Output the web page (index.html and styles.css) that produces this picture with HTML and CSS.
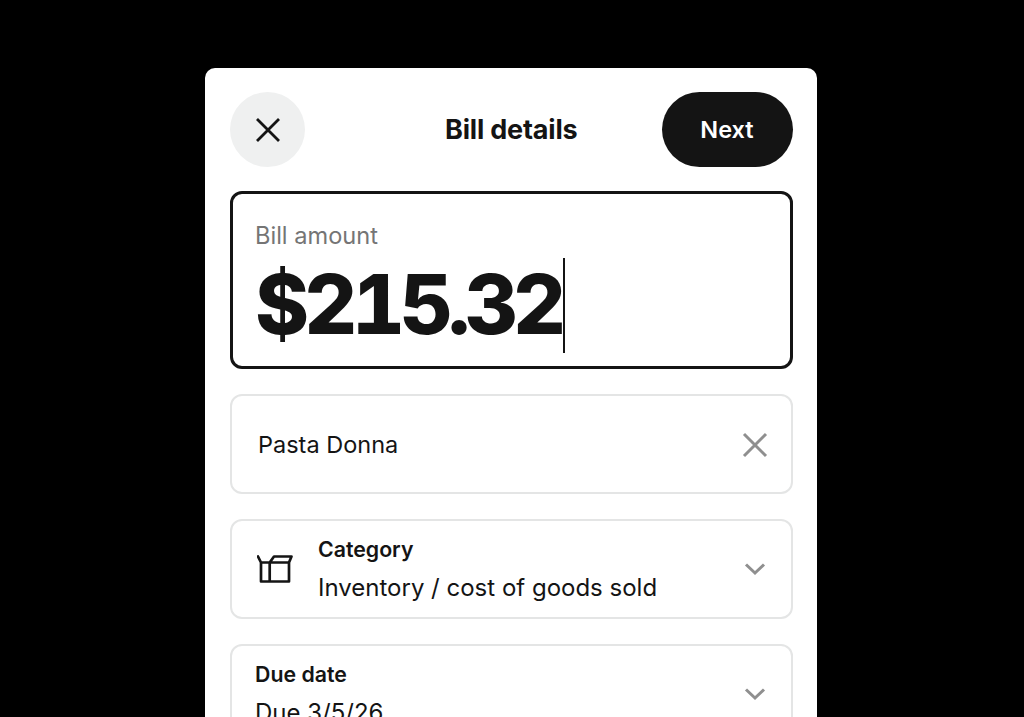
FILE: index.html
```html
<!DOCTYPE html>
<html>
<head>
  <title>Bill details</title>
  <link rel="stylesheet" href="styles.css">
</head>
<body>
  <div class="card">
    <div class="header">
      <button class="close-button">
        <svg width="26" height="26" viewBox="0 0 26 26"><path d="M2 2L24 24M24 2L2 24" fill="none" stroke="#141414" stroke-width="2.800"/></svg>
      </button>
      <h1 class="heading">Bill details</h1>
      <button class="next-button">Next</button>
    </div>

    <div class="amount-box">
      <div class="amount-label">Bill amount</div>
      <div class="amount-value">$215.32<span class="caret"></span></div>
    </div>

    <div class="field vendor-field">
      <span class="field-value vendor-name">Pasta Donna</span>
      <svg class="field-icon" width="26" height="26" viewBox="0 0 26 26"><path d="M2 2L24 24M24 2L2 24" fill="none" stroke="#8f8f8f" stroke-width="3"/></svg>
    </div>

    <div class="field">
      <svg class="box-icon" width="36" height="28" viewBox="0 0 36 28"><path d="M1 1.500L4 7.500H32M4 7.500V26.500H32V7.500M12.700 7.500V26.500M12.700 7.500L17 1.500H34.500L32 7.500" fill="none" stroke="#141414" stroke-width="2.700" stroke-linejoin="round" stroke-linecap="round"/></svg>
      <div class="field-text">
        <div class="field-label">Category</div>
        <span class="field-value">Inventory / cost of goods sold</span>
      </div>
      <svg class="field-icon" width="22" height="14" viewBox="0 0 22 14"><path d="M2 2.500L11 11L20 2.500" fill="none" stroke="#8f8f8f" stroke-width="3"/></svg>
    </div>

    <div class="field">
      <div class="field-text">
        <div class="field-label">Due date</div>
        <span class="field-value">Due 3/5/26</span>
      </div>
      <svg class="field-icon" width="22" height="14" viewBox="0 0 22 14"><path d="M2 2.500L11 11L20 2.500" fill="none" stroke="#8f8f8f" stroke-width="3"/></svg>
    </div>
  </div>
</body>
</html>
```

FILE: styles.css
```css
html, body {
  height: 100%;
}

body {
  margin: 0;
  background-color: #000;
  font-family: Inter, "Liberation Sans", sans-serif;
  color: #141414;
  overflow: hidden;
}

.card {
  width: 562.500px;
  margin: 68px 0 0 205px;
  padding: 24px 24.500px 40px 25px;
  background-color: #fff;
  border-radius: 10px;
}

.header {
  display: grid;
  grid-template-columns: 1fr auto 1fr;
  align-items: center;
  margin-bottom: 24px;
}

.close-button {
  display: flex;
  align-items: center;
  justify-content: center;
  width: 75px;
  height: 75px;
  padding: 0;
  border: none;
  border-radius: 50%;
  background-color: #eff0f0;
}

.heading {
  margin: 0;
  font-size: 27px;
  font-weight: 700;
  letter-spacing: -0.200px;
}

.next-button {
  justify-self: end;
  width: 131px;
  height: 75px;
  padding: 0;
  border: none;
  border-radius: 38px;
  background-color: #141414;
  color: #fff;
  font-family: inherit;
  font-size: 23.500px;
  font-weight: 600;
}

.amount-box {
  box-sizing: border-box;
  height: 178px;
  padding: 28px 22px 0;
  border: 3px solid #141414;
  border-radius: 12px;
  margin-bottom: 25px;
}

.amount-label {
  font-size: 23.600px;
  line-height: 28px;
  color: #757575;
}

.amount-value {
  display: flex;
  align-items: center;
  height: 100px;
  margin-top: 5px;
  font-size: 82px;
  font-weight: 800;
  font-feature-settings: "tnum";
  letter-spacing: -5px;
  line-height: 100px;
}

.caret {
  width: 2px;
  height: 95px;
  margin-left: 2px;
  background-color: #141414;
}

.field {
  box-sizing: border-box;
  display: flex;
  align-items: center;
  height: 100px;
  padding: 0 25px 0 23px;
  border: 2px solid #e4e5e5;
  border-radius: 12px;
  margin-bottom: 25px;
}

.vendor-field {
  padding: 1px 23px 0 26px;
}

.field-text {
  flex: 1;
}

.field-label {
  font-size: 21.300px;
  font-weight: 600;
  line-height: 28px;
  margin-bottom: 10px;
}

.field-value {
  font-size: 24px;
  line-height: 30px;
}

.vendor-name {
  flex: 1;
  font-size: 23.500px;
}

.box-icon {
  margin: 0 25px 0 2px;
}
```
